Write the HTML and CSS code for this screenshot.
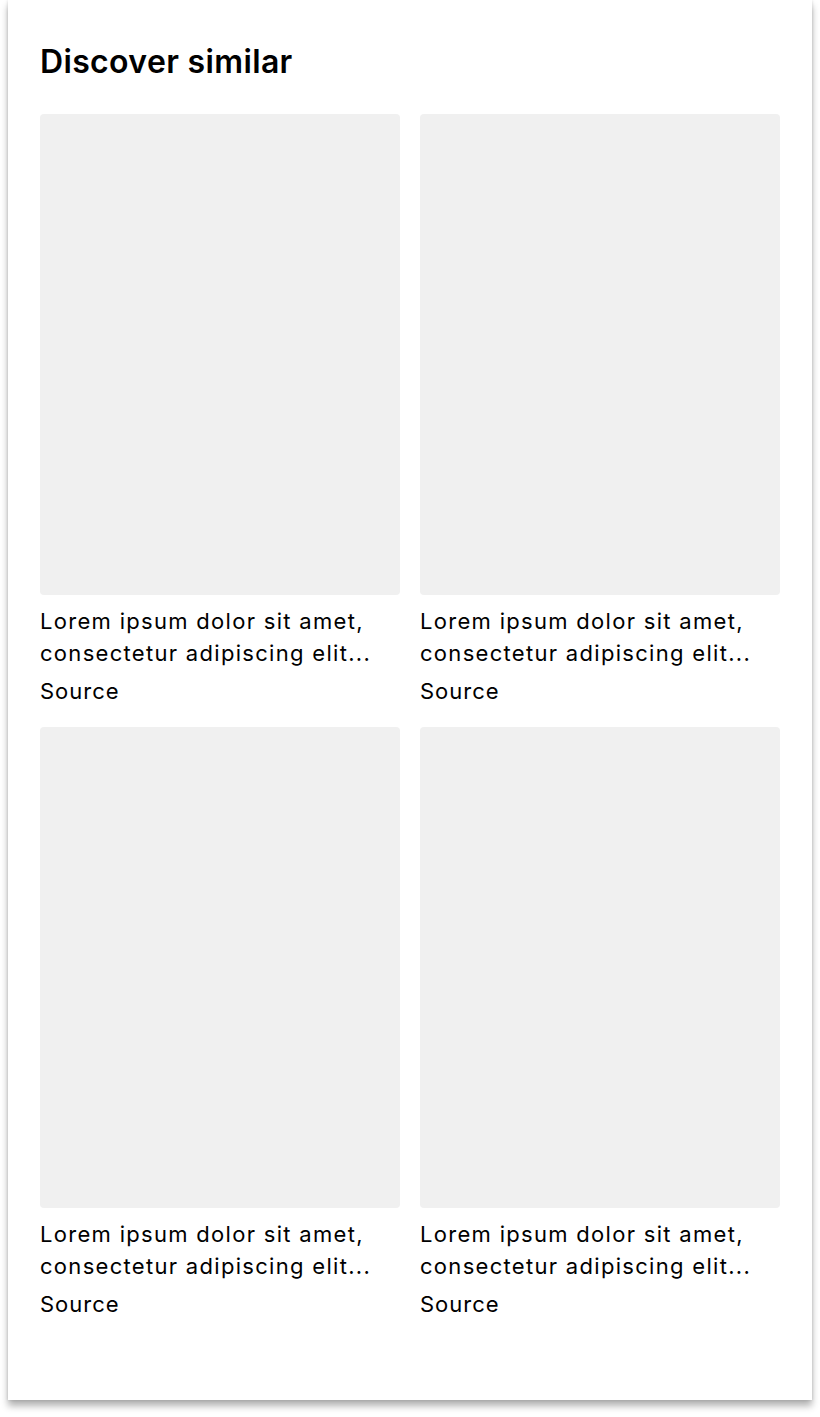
FILE: index.html
```html
<!DOCTYPE html>
<html lang="en">
<head>
<meta charset="utf-8">
<title>Discover similar</title>
<link rel="stylesheet" href="styles.css">
</head>
<body>
<section class="panel">
  <h2 class="title">Discover similar</h2>
  <div class="grid">
    <article class="item">
      <div class="thumb"></div>
      <p class="caption">Lorem ipsum dolor sit amet, consectetur adipiscing elit...</p>
      <p class="source">Source</p>
    </article>
    <article class="item">
      <div class="thumb"></div>
      <p class="caption">Lorem ipsum dolor sit amet, consectetur adipiscing elit...</p>
      <p class="source">Source</p>
    </article>
    <article class="item">
      <div class="thumb"></div>
      <p class="caption">Lorem ipsum dolor sit amet, consectetur adipiscing elit...</p>
      <p class="source">Source</p>
    </article>
    <article class="item">
      <div class="thumb"></div>
      <p class="caption">Lorem ipsum dolor sit amet, consectetur adipiscing elit...</p>
      <p class="source">Source</p>
    </article>
  </div>
</section>
</body>
</html>
```
FILE: styles.css
```css
html, body {
  margin: 0;
  padding: 0;
  background: #ffffff;
}
body {
  font-family: Inter, "Noto Sans", "Liberation Sans", sans-serif;
  color: #000000;
  padding: 0 8px 17px 8px;
}
.panel {
  background: #ffffff;
  box-shadow: 0 6px 7px rgba(0, 0, 0, 0.3), 0 0 3px rgba(0, 0, 0, 0.14);
  padding: 40px 32px 80px 32px;
  height: 1400px;
  box-sizing: border-box;
}
.title {
  margin: 0 0 30px 0;
  font-size: 32px;
  line-height: 44px;
  font-weight: 600;
  letter-spacing: 0.35px;
}
.grid {
  display: grid;
  grid-template-columns: 360px 360px;
  column-gap: 20px;
  row-gap: 20px;
}
.item {
  display: flex;
  flex-direction: column;
}
.thumb {
  height: 481px;
  background: #f0f0f0;
  border-radius: 4px;
}
.caption {
  margin: 10px 0 0 0;
  font-size: 22px;
  line-height: 32px;
  letter-spacing: 1.3px;
}
.source {
  margin: 6px 0 0 0;
  font-size: 22px;
  line-height: 32px;
  letter-spacing: 1px;
}
```
